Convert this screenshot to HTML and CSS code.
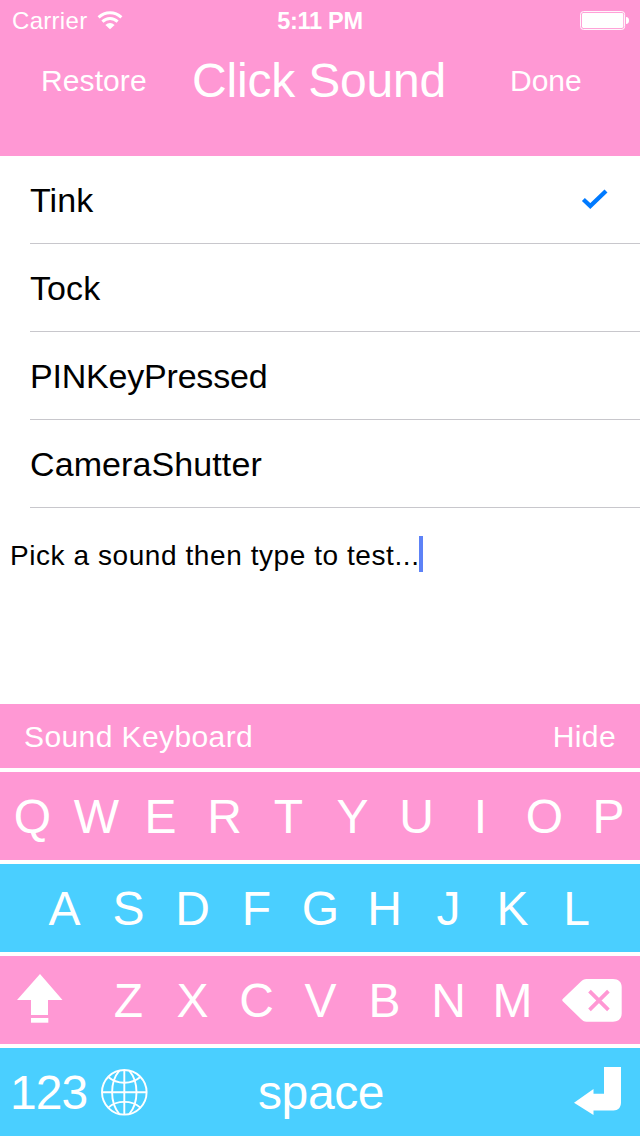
FILE: index.html
```html
<!DOCTYPE html>
<html lang="en">
<head>
<meta charset="utf-8">
<title>Click Sound</title>
<link rel="stylesheet" href="styles.css">
</head>
<body>
<header class="header">
  <div class="status">
    <div class="status-left">
      <span class="carrier">Carrier</span>
      <svg class="wifi" width="26" height="20" viewBox="0 0 26 20">
        <g fill="none" stroke="#fff" stroke-width="3">
          <path d="M1.600 7.300C8.200 1.100 17.800 1.100 24.400 7.300"/>
          <path d="M5.400 11.600C9.800 7.400 16.200 7.400 20.600 11.600"/>
        </g>
        <path fill="#fff" d="M8.400 15C11.300 12.300 14.700 12.300 17.600 15L13 19.200Z"/>
      </svg>
    </div>
    <span class="time">5:11 PM</span>
    <svg class="battery" width="50" height="20" viewBox="0 0 50 20">
      <rect x=".6" y=".6" width="44" height="17.8" rx="2.8" fill="none" stroke="#fff"/>
      <rect x="2" y="2" width="41.3" height="15" rx="1.4" fill="#fff"/>
      <path fill="#fff" d="M46 6C48.2 6 49 7.4 49 9.5S48.2 13 46 13Z"/>
    </svg>
  </div>
  <nav class="navbar">
    <span class="nav-restore">Restore</span>
    <h1 class="nav-title">Click Sound</h1>
    <span class="nav-done">Done</span>
  </nav>
</header>

<ul class="sounds">
  <li class="sound"><span>Tink</span>
    <svg class="check" width="28" height="22" viewBox="0 0 28 22"><path d="M2.400 10.500L9.300 17L25 2" fill="none" stroke="#007aff" stroke-width="4.300"/></svg>
  </li>
  <li class="sound"><span>Tock</span></li>
  <li class="sound"><span class="tight">PINKeyPressed</span></li>
  <li class="sound"><span>CameraShutter</span></li>
</ul>

<div class="test-field"><span class="test-text">Pick a sound then type to test...</span><span class="caret"></span></div>

<section class="keyboard">
  <div class="toolbar"><span class="toolbar-name">Sound Keyboard</span><span class="toolbar-hide">Hide</span></div>
  <div class="row pink"><b>Q</b><b>W</b><b>E</b><b>R</b><b>T</b><b>Y</b><b>U</b><b>I</b><b>O</b><b>P</b></div>
  <div class="row blue"><b>A</b><b>S</b><b>D</b><b>F</b><b>G</b><b>H</b><b>J</b><b>K</b><b>L</b></div>
  <div class="row pink">
    <svg class="key-wide" width="96" height="88" viewBox="0 0 96 88" fill="#fff">
      <path d="M40 18L62.500 44H48V59H31V44H17Z"/>
      <rect x="31" y="62" width="17.300" height="4.700"/>
    </svg>
    <b>Z</b><b>X</b><b>C</b><b>V</b><b>B</b><b>N</b><b>M</b>
    <svg class="key-wide" width="96" height="88" viewBox="0 0 96 88">
      <path fill="#fff" d="M42.500 23H69C74.500 23 77.700 26.200 77.700 31V57.500C77.700 62.300 74.500 65.700 69 65.700H42.500C40 65.700 38.500 64.500 37 63L19 45.500Q17.400 44 19 42.700L37 25.500C38.500 24 40 23 42.500 23Z"/>
      <path stroke="#ff98d4" stroke-width="3.700" d="M45.500 35.100L64.400 53.900M64.400 35.100L45.500 53.900"/>
    </svg>
  </div>
  <div class="row blue bottom">
    <span class="numbers">123</span>
    <svg class="globe" width="48" height="48" viewBox="0 0 48 48" fill="none" stroke="#fff" stroke-width="1.900">
      <circle cx="24.300" cy="24.300" r="22.300"/>
      <path d="M24.300 2V46.600M2 24.300H46.600"/>
      <path d="M19.300 2.600C9.700 14 9.700 34.600 19.300 46M29.300 2.600C38.900 14 38.900 34.600 29.300 46"/>
      <path d="M8.300 9C17 16.600 31.600 16.600 40.300 9M8.300 39.600C17 32 31.600 32 40.300 39.600"/>
    </svg>
    <span class="space">space</span>
    <svg class="return" width="48" height="50" viewBox="0 0 48 50" fill="#fff">
      <path d="M30 0H47V35.500C47 40.500 44 43.500 39.500 43.500H19.500V48L0 35.700L19.500 22V26.700H30Z"/>
    </svg>
  </div>
</section>
</body>
</html>
```
FILE: styles.css
```css
* { box-sizing: border-box; }
body {
  margin: 0;
  width: 640px;
  height: 1136px;
  display: flex;
  flex-direction: column;
  overflow: hidden;
  background: #fff;
  color: #000;
  font-family: "Liberation Sans", Arial, sans-serif;
}
svg { display: block; flex: none; }
.header {
  height: 156px;
  background: #ff98d4;
  color: #fff;
}
.status {
  height: 40px;
  display: grid;
  grid-template-columns: 1fr auto 1fr;
  align-items: center;
  padding: 2px 10px 0 12px;
  font-size: 24px;
  line-height: 28px;
}
.status-left { display: flex; align-items: center; gap: 10px; }
.carrier { letter-spacing: 0.3px; }
.wifi { margin-top: -2px; }
.time { font-weight: bold; font-size: 23.5px; letter-spacing: -0.3px; margin-left: -2px; }
.battery { justify-self: end; margin-top: -1px; }
.navbar {
  height: 81px;
  display: grid;
  grid-template-columns: 192px 256px 192px;
  align-items: center;
  font-size: 30px;
}
.nav-restore { padding-left: 41px; letter-spacing: 0.1px; }
.nav-title { margin: 0; font-size: 48px; font-weight: normal; white-space: nowrap; letter-spacing: -0.2px; }
.nav-done { padding-left: 62px; }
.sounds { margin: 0; padding: 0 0 0 30px; list-style: none; }
.sound {
  height: 88px;
  display: flex;
  align-items: center;
  justify-content: space-between;
  padding: 1px 31px 0 0;
  border-bottom: 1px solid #c8c7cc;
  font-size: 34px;
  letter-spacing: 0.1px;
}
.tight { letter-spacing: -0.2px; }
.test-field {
  flex: 1;
  display: flex;
  align-items: flex-start;
  padding: 28px 0 0 10px;
  font-size: 28px;
  line-height: 40px;
}
.test-text { letter-spacing: 0.57px; }
.caret { width: 4px; height: 36px; background: #5d82f7; }
.keyboard {
  display: flex;
  flex-direction: column;
  gap: 4px;
  color: #fff;
}
.toolbar {
  height: 64px;
  display: flex;
  align-items: center;
  justify-content: space-between;
  padding: 2px 24px 0;
  background: #ff98d4;
  font-size: 30px;
}
.toolbar-name { letter-spacing: 0.4px; }
.toolbar-hide { letter-spacing: 0.4px; }
.row {
  height: 88px;
  display: flex;
  align-items: center;
  justify-content: center;
  font-size: 48px;
}
.row b { width: 64px; padding-left: 1px; font-weight: normal; text-align: center; }
.pink { background: #ff98d4; }
.blue { background: #4acfff; }
.bottom { justify-content: flex-start; padding: 0 18px 0 10px; }
.numbers { width: 90px; letter-spacing: -1px; }
.space { flex: 1; padding-left: 110px; letter-spacing: -0.4px; }
```
